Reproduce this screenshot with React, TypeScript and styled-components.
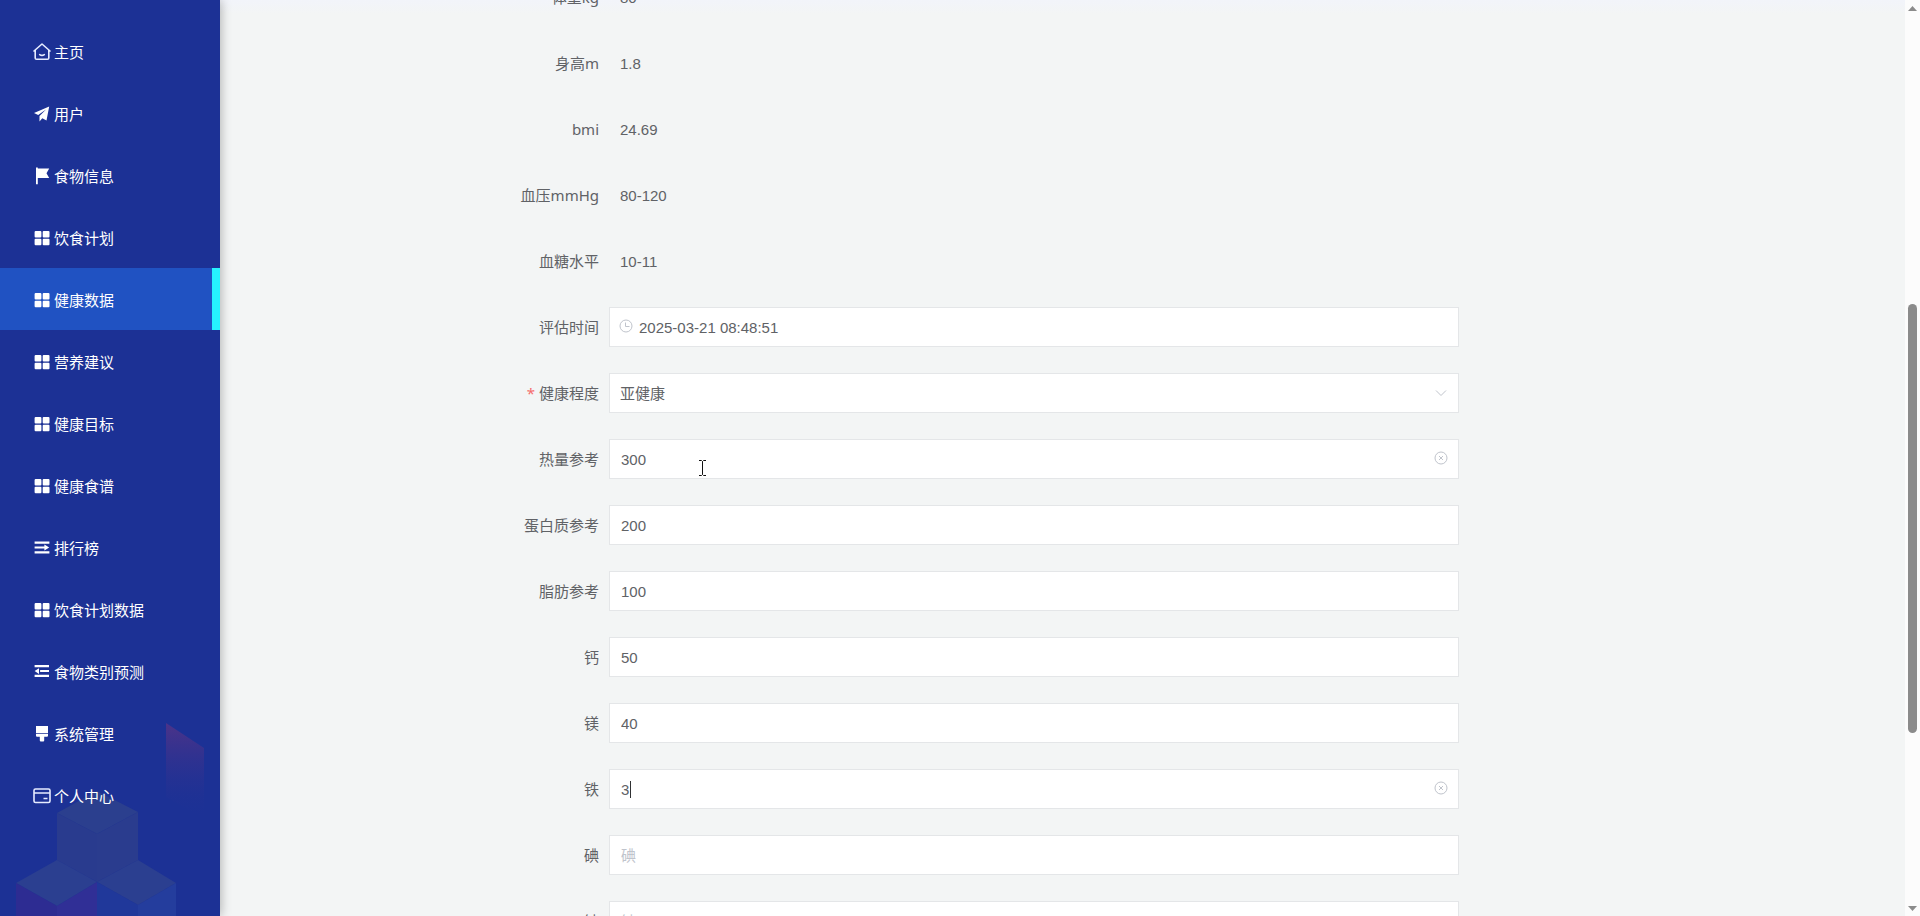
import React from "react";
import styled, { createGlobalStyle } from "styled-components";

const GlobalStyle = createGlobalStyle`
  *, *::before, *::after { box-sizing: border-box; }
  html, body { margin: 0; padding: 0; }
  body {
    overflow: hidden;
    background: #f3f5f5;
    color: #606266;
    font-family: "Liberation Sans", "Noto Sans CJK SC", sans-serif;
    font-size: 15px;
  }
`;

const Page = styled.div`
  display: flex;
  height: 100vh;
  overflow: hidden;
`;

const Sidebar = styled.aside`
  position: relative;
  z-index: 1;
  flex: 0 0 220px;
  background: #1c3195;
  box-shadow: 1px 0 10px rgba(0, 0, 0, 0.28);
`;

const Backdrop = styled.svg`
  position: absolute;
  left: 0;
  bottom: 0;
  pointer-events: none;
`;

const Menu = styled.nav`
  position: relative;
  display: flex;
  flex-direction: column;
  padding-top: 20px;
`;

const MenuLink = styled.a<{ $active?: boolean }>`
  display: flex;
  align-items: center;
  gap: 3px;
  height: 62px;
  padding: 4px 0 0 33px;
  border-right: 8px solid ${(p) => (p.$active ? "#26f3ff" : "transparent")};
  background: ${(p) => (p.$active ? "#2052c2" : "transparent")};
  background-clip: padding-box;
  color: #fff;
  line-height: 20px;
  text-decoration: none;
`;

const MenuIcon = styled.svg`
  flex: none;
  width: 18px;
  height: 18px;
  margin-bottom: 2px;
  fill: #fff;
`;

const Main = styled.main`
  flex: 1;
  display: grid;
  grid-template-columns: 289fr 950fr 446fr;
  align-items: start;
  min-width: 0;
  overflow: hidden;
  background: linear-gradient(#f2f4fa, #f3f5f5 14px);
`;

const Form = styled.form`
  grid-column: 2;
  display: flex;
  flex-direction: column;
  gap: 26px;
  margin-top: -23px;
`;

const Row = styled.div`
  display: flex;
  height: 40px;
`;

const Label = styled.label<{ $required?: boolean }>`
  flex: 0 0 100px;
  padding-right: 10px;
  font-family: "Noto Sans", "Noto Sans CJK SC", sans-serif;
  line-height: 40px;
  text-align: right;
  white-space: nowrap;
  ${(p) => p.$required && `&::before { content: "*"; color: #f56c6c; margin-right: 4px; }`}
`;

const Value = styled.output`
  padding-left: 11px;
  line-height: 42px;
`;

const Field = styled.div`
  position: relative;
  flex: 1;
`;

const control = `
  width: 100%;
  height: 40px;
  border: 1px solid #e4e6e8;
  border-radius: 0;
  outline: none;
  background: #fff;
  color: #606266;
  font: inherit;
`;

const TextInput = styled.input<{ $icon?: boolean }>`
  ${control}
  padding: 0 40px 0 ${(p) => (p.$icon ? 29 : 11)}px;
  &::placeholder { color: #c0c4cc; opacity: 1; }
`;

const Select = styled.select`
  ${control}
  appearance: none;
  padding: 0 40px 0 10px;
`;

const Prefix = styled.svg`
  position: absolute;
  left: 10px;
  top: 12px;
  width: 14px;
  height: 14px;
  fill: none;
  stroke: #c0c4cc;
  pointer-events: none;
`;

const Arrow = styled(Prefix)`
  left: auto;
  right: 11px;
  top: 13px;
`;

const Clear = styled.button`
  position: absolute;
  right: 11px;
  top: 12px;
  width: 14px;
  height: 14px;
  padding: 0;
  border: 0;
  background: none;
  svg { display: block; fill: none; stroke: #c0c4cc; }
`;

const Pointer = styled.svg`
  position: absolute;
  left: 89px;
  top: 20px;
  stroke: #111;
  fill: none;
  pointer-events: none;
`;

const Caret = styled.span`
  position: absolute;
  left: 21px;
  top: 12px;
  width: 1px;
  height: 17px;
  background: #303133;
  pointer-events: none;
`;

const Scrollbar = styled.div`
  flex: 0 0 15px;
  display: flex;
  flex-direction: column;
  align-items: center;
  padding: 6px 0 5px;
  background: #fcfcfc;
  svg { flex: none; fill: #8b8b8b; }
`;

const Track = styled.div`
  flex: 1;
  display: flex;
  flex-direction: column;
`;

const Thumb = styled.div`
  flex: 430;
  width: 9px;
  border-radius: 5px;
  background: #8b8b8b;
`;

const Spacer = styled.div<{ $grow: number }>`
  flex: ${(p) => p.$grow};
`;

const line = { fill: "none", stroke: "#e6ecff", strokeWidth: 1.6 };

const icons: Record<string, React.ReactNode> = {
  home: (
    <g {...line} strokeLinejoin="round" strokeLinecap="round">
      <path d="M1 8 9 1l8 7M2.2 7.2V15q0 1.3 1.3 1.3h11q1.3 0 1.3-1.3V7.2M6.7 11.6q2.3 1.6 4.6 0" />
    </g>
  ),
  plane: <path d="M16.2 1.5 1 8l4.2 2.1L13 4.500 6.500 11v5.500l2.800-3.300 4.200 2.200Z" />,
  flag: <path d="M3 .5h1.800V1.500H16.200l-2.700 4.700 2.700 4.800H4.800v6.200H3Z" />,
  grid: (
    <g>
      <rect x="1.600" y="2" width="6.800" height="6.500" rx="1" />
      <rect x="9.700" y="2" width="6.800" height="6.500" rx="1" />
      <rect x="1.600" y="9.700" width="6.800" height="6.500" rx="1" />
      <rect x="9.700" y="9.700" width="6.800" height="6.500" rx="1" />
    </g>
  ),
  unfold: <path d="M1.600 2.500h14.800v2.200H1.600Zm0 4.900h9.800v2.200H1.600Zm0 4.900h14.800v2.200H1.600ZM11.400 5.600l4.800 2.900-4.800 2.900Z" />,
  fold: <path d="M1.600 2h14.400v2.200H1.600Zm5.500 4.900h8.900v2.200H7.100Zm-5.500 4.900h14.400v2.200H1.600ZM6 5.200v5.800L1.600 8Z" />,
  brush: <path d="M3 1h12v7H3Zm0 7.800h12v1.900q0 1-1 1h-2.800V15.500q0 1-1 1H7.800q-1 0-1-1v-3.800H4q-1 0-1-1Z" />,
  card: (
    <g {...line}>
      <rect x="1" y="2" width="16" height="13.500" rx="1.500" />
      <path d="M1 6h16M10.500 11.500h4" />
    </g>
  ),
};

const menu: [string, string][] = [
  ["home", "主页"],
  ["plane", "用户"],
  ["flag", "食物信息"],
  ["grid", "饮食计划"],
  ["grid", "健康数据"],
  ["grid", "营养建议"],
  ["grid", "健康目标"],
  ["grid", "健康食谱"],
  ["unfold", "排行榜"],
  ["grid", "饮食计划数据"],
  ["fold", "食物类别预测"],
  ["brush", "系统管理"],
  ["card", "个人中心"],
];

const readings: [string, string][] = [
  ["体重kg", "80"],
  ["身高m", "1.8"],
  ["bmi", "24.69"],
  ["血压mmHg", "80-120"],
  ["血糖水平", "10-11"],
];

type Nutrient = { id: string; label: string; value?: string; clear?: boolean; pointer?: boolean; caret?: boolean };

const nutrients: Nutrient[] = [
  { id: "heat", label: "热量参考", value: "300", clear: true, pointer: true },
  { id: "protein", label: "蛋白质参考", value: "200" },
  { id: "fat", label: "脂肪参考", value: "100" },
  { id: "calcium", label: "钙", value: "50" },
  { id: "magnesium", label: "镁", value: "40" },
  { id: "iron", label: "铁", value: "3", clear: true, caret: true },
  { id: "iodine", label: "碘" },
  { id: "sodium", label: "钠" },
];

function NutrientRow({ id, label, value, clear, pointer, caret }: Nutrient) {
  return (
    <Row>
      <Label htmlFor={id}>{label}</Label>
      <Field>
        <TextInput id={id} defaultValue={value} placeholder={label} />
        {caret && <Caret />}
        {clear && (
          <Clear type="button" aria-label={`清空${label}`}>
            <svg width="14" height="14" viewBox="0 0 14 14">
              <circle cx="7" cy="7" r="6" />
              <path d="m5 5 4 4m0-4-4 4" />
            </svg>
          </Clear>
        )}
        {pointer && (
          <Pointer width="9" height="18" viewBox="0 0 9 18" aria-hidden="true">
            <path d="M1 1.500h2.500l1 1 1-1H8M4.500 2.500v13M1 16.500h2.500l1-1 1 1H8" />
          </Pointer>
        )}
      </Field>
    </Row>
  );
}

export default function App() {
  return (
    <>
      <GlobalStyle />
      <Page>
        <Sidebar>
          <Backdrop width="220" height="216" viewBox="0 0 220 216" aria-hidden="true">
            <defs>
              <linearGradient id="beam" x1="0" y1="0" x2="0" y2="1">
                <stop offset="0" stopColor="#4c3389" />
                <stop offset="1" stopColor="#1c3195" stopOpacity="0" />
              </linearGradient>
            </defs>
            <path fill="url(#beam)" d="m166 23 38 25v71l-38-22Z" />
            <path fill="#2b3f8e" d="m97 91 41 21-41 22-40-21Z" />
            <path fill="#293b8e" d="m57 113 40 21v48l-40-22Z" />
            <path fill="#2a3c8e" d="m138 112-41 22v48l41-22Z" />
            <path fill="#2b3f90" d="m57 160 40 22-40 24-41-23ZM138 160l38 23-38 22-41-23Z" />
            <path fill="#2d2c92" d="m16 183 41 23v10H16Z" />
            <path fill="#302f96" d="m97 182-40 24v10h40Z" />
            <path fill="#20389a" d="m97 182 41 23v11H97Z" />
            <path fill="#243d9d" d="m176 183-38 22v11h38Z" />
          </Backdrop>
          <Menu>
            {menu.map(([icon, text], i) => (
              <MenuLink key={text} href="#" $active={i === 4}>
                <MenuIcon viewBox="0 0 18 18" aria-hidden="true">{icons[icon]}</MenuIcon>
                {text}
              </MenuLink>
            ))}
          </Menu>
        </Sidebar>
        <Main>
          <Form>
            {readings.map(([label, value], i) => (
              <Row key={label}>
                <Label htmlFor={`reading-${i}`}>{label}</Label>
                <Value id={`reading-${i}`}>{value}</Value>
              </Row>
            ))}
            <Row>
              <Label htmlFor="time">评估时间</Label>
              <Field>
                <TextInput id="time" $icon defaultValue="2025-03-21 08:48:51" />
                <Prefix viewBox="0 0 14 14" aria-hidden="true">
                  <circle cx="7" cy="7" r="6" />
                  <path d="M6.500 3.500v4h4" />
                </Prefix>
              </Field>
            </Row>
            <Row>
              <Label htmlFor="level" $required>健康程度</Label>
              <Field>
                <Select id="level" defaultValue="亚健康">
                  <option>亚健康</option>
                </Select>
                <Arrow viewBox="0 0 14 14" aria-hidden="true">
                  <path d="m2 4.500 5 5 5-5" />
                </Arrow>
              </Field>
            </Row>
            {nutrients.map((n) => (
              <NutrientRow key={n.id} {...n} />
            ))}
          </Form>
        </Main>
        <Scrollbar aria-hidden="true">
          <svg width="9" height="5" viewBox="0 0 9 5"><path d="m0 5 4.500-5L9 5Z" /></svg>
          <Track>
            <Spacer $grow={293} />
            <Thumb />
            <Spacer $grow={173} />
          </Track>
          <svg width="9" height="5" viewBox="0 0 9 5"><path d="m0 0 4.500 5L9 0Z" /></svg>
        </Scrollbar>
      </Page>
    </>
  );
}
